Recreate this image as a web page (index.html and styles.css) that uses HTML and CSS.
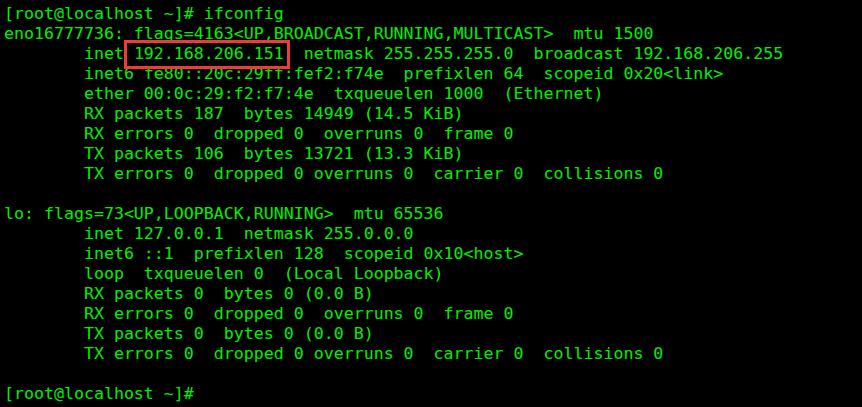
FILE: index.html
```html
<!DOCTYPE html>
<html>

<head>
    <title>Terminal</title>
    <link rel="stylesheet" href="styles.css">
</head>

<body>
<pre class="term">[root@localhost ~]# ifconfig
eno16777736: flags=4163&lt;UP,BROADCAST,RUNNING,MULTICAST&gt;  mtu 1500
        inet <span class="mark">192.168.206.151</span>  netmask 255.255.255.0  broadcast 192.168.206.255
        inet6 fe80::20c:29ff:fef2:f74e  prefixlen 64  scopeid 0x20&lt;link&gt;
        ether 00:0c:29:f2:f7:4e  txqueuelen 1000  (Ethernet)
        RX packets 187  bytes 14949 (14.5 KiB)
        RX errors 0  dropped 0  overruns 0  frame 0
        TX packets 106  bytes 13721 (13.3 KiB)
        TX errors 0  dropped 0 overruns 0  carrier 0  collisions 0

lo: flags=73&lt;UP,LOOPBACK,RUNNING&gt;  mtu 65536
        inet 127.0.0.1  netmask 255.0.0.0
        inet6 ::1  prefixlen 128  scopeid 0x10&lt;host&gt;
        loop  txqueuelen 0  (Local Loopback)
        RX packets 0  bytes 0 (0.0 B)
        RX errors 0  dropped 0  overruns 0  frame 0
        TX packets 0  bytes 0 (0.0 B)
        TX errors 0  dropped 0 overruns 0  carrier 0  collisions 0

[root@localhost ~]#</pre>
</body>

</html>
```

FILE: styles.css
```css
html, body {
    margin: 0;
    background: #000000;
    height: 100%;
    overflow: hidden;
}

.term {
    margin: 0;
    padding: 4px 0 0 4px;
    font-family: "DejaVu Sans Mono", monospace;
    font-size: 16.6px;
    line-height: 20px;
    color: #00f000;
}

.mark {
    position: relative;
}

.mark::after {
    content: "";
    position: absolute;
    left: -10px;
    right: -6px;
    top: -4px;
    bottom: -6px;
    border: 3px solid #ee3b3b;
}
```
